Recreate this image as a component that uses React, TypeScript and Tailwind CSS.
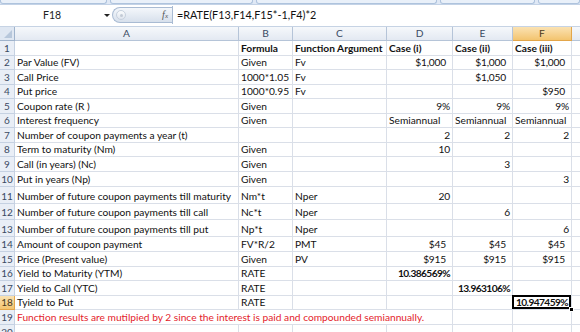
import React from "react";

type Row = [number, string, string, string, string, string, string];

const rows: Row[] = [
  [15, "", "Formula", "Function Argument", "Case (i)", "Case (ii)", "Case (iii)"],
  [14, "Par Value (FV)", "Given", "Fv", "$1,000", "$1,000", "$1,000"],
  [15, "Call Price", "1000*1.05", "Fv", "", "$1,050", ""],
  [14, "Put price", "1000*0.95", "Fv", "", "", "$950"],
  [15, "Coupon rate (R )", "Given", "", "9%", "9%", "9%"],
  [14, "Interest frequency", "Given", "", "Semiannual", "Semiannual", "Semiannual"],
  [15, "Number of coupon payments a year (t)", "", "", "2", "2", "2"],
  [14, "Term to maturity (Nm)", "Given", "", "10", "", ""],
  [15, "Call (in years) (Nc)", "Given", "", "", "3", ""],
  [15, "Put in years (Np)", "Given", "", "", "", "3"],
  [17, "Number of future coupon payments till maturity", "Nm*t", "Nper", "20", "", ""],
  [16, "Number of future coupon payments till  call", "Nc*t", "Nper", "", "6", ""],
  [17, "Number of future coupon payments till  put", "Np*t", "Nper", "", "", "6"],
  [15, "Amount of coupon payment", "FV*R/2", "PMT", "$45", "$45", "$45"],
  [15, "Price (Present value)", "Given", "PV", "$915", "$915", "$915"],
  [14, "Yield to Maturity (YTM)", "RATE", "", "10.386569%", "", ""],
  [15, "Yield to Call (YTC)", "RATE", "", "", "13.963106%", ""],
  [14, "Tyield to Put", "RATE", "", "", "", "10.947459%"],
  [15, "Function results are mutilpied by 2 since the interest is paid and compounded semiannually.", "", "", "", "", ""],
  [15, "", "", "", "", "", ""],
];

const heights: Record<number, string> = {
  14: "h-[14px]",
  15: "h-[15px]",
  16: "h-[16px]",
  17: "h-[17px]",
};

const grid = "border-r border-b border-[#dadfe8]";

function ValueCell({ v, w, bold }: { v: string; w: string; bold: boolean }) {
  const isNum = /^[\d$]/.test(v);
  const cur = v.startsWith("$");
  const pct = bold && v.endsWith("%");
  return (
    <div
      className={`${w} ${grid} flex items-end pb-[1px] whitespace-nowrap overflow-hidden ${
        isNum ? "justify-end" : "justify-start pl-[2px]"
      } ${cur ? "pr-[6px]" : isNum ? "pr-[2px]" : ""} ${bold ? "font-bold" : ""} ${
        pct ? "tracking-[-0.6px]" : isNum ? "tracking-[-0.2px]" : ""
      }`}
    >
      {v}
    </div>
  );
}

export default function App() {
  return (
    <div className="w-[580px] h-[332px] overflow-hidden bg-white font-['Lato',sans-serif] text-[10.2px] leading-[12px] text-[#111]">
      {/* ribbon edge */}
      <div className="h-[5px] flex gap-[3px] bg-[#dfe8f5] border-b border-[#c3d2e6]">
        <div className="w-[107px] rounded-b-[3px] border border-t-0 border-[#aec3dd] bg-[#e9f0f9]" />
        <div className="w-[143px] rounded-b-[3px] border border-t-0 border-[#aec3dd] bg-[#e9f0f9]" />
        <div className="w-[181px] rounded-b-[3px] border border-t-0 border-[#aec3dd] bg-[#e9f0f9]" />
        <div className="w-[95px] rounded-b-[3px] border border-t-0 border-[#aec3dd] bg-[#e9f0f9]" />
        <div className="flex-1 rounded-b-[3px] border border-t-0 border-[#aec3dd] bg-[#e9f0f9]" />
      </div>

      {/* formula bar */}
      <div className="h-[20px] flex items-center bg-white">
        <div className="w-[104px] text-center text-[10.5px] text-[#222]">F18</div>
        <div className="w-[5px] flex justify-center">
          <div className="w-0 h-0 border-l-[3px] border-r-[3px] border-t-[3px] border-l-transparent border-r-transparent border-t-[#222]" />
        </div>
        <div className="ml-[3px] w-[60px] h-[16px] rounded-l-full border border-r-0 border-[#a9bbd3] bg-gradient-to-b from-[#f4f7fb] to-[#d7e0ec] flex items-center justify-between pl-[3px] pr-[4px]">
          <div className="w-[10px] h-[10px] rounded-full border border-[#c7d1de] bg-gradient-to-b from-[#fbfcfd] to-[#dfe5ee] flex items-center justify-center">
            <div className="w-[3px] h-[3px] rounded-full bg-[#c3cbd6]" />
          </div>
          <span className="font-['Liberation_Serif',serif] italic text-[10px] text-[#555]">
            f<span className="text-[7px]">x</span>
          </span>
        </div>
        <div className="flex-1 h-[18px] border-l border-[#a9bbd3] flex items-center pl-[4px] text-[10.8px] text-[#111]">
          =RATE(F13,F14,F15*-1,F4)*2
        </div>
      </div>
      <div className="h-[1px] bg-white" />

      {/* column headers */}
      <div className="flex h-[15px] text-[#3a4a63] border-t border-[#c6d3e4] leading-none">
        <div className="w-[15px] border-r border-b border-[#9fb3cc] bg-[#dfe7f2] relative">
          <div className="absolute right-[2px] bottom-[2px] w-0 h-0 border-l-[8px] border-l-transparent border-b-[8px] border-b-[#b7c7db]" />
        </div>
        {[
          ["A", "w-[224px]"],
          ["B", "w-[54px]"],
          ["C", "w-[94px]"],
          ["D", "w-[66px]"],
          ["E", "w-[60px]"],
        ].map(([l, w]) => (
          <div
            key={l}
            className={`${w} border-r border-b border-[#b5c4d8] bg-gradient-to-b from-[#f6f8fb] to-[#e3e9f2] flex items-center justify-center`}
          >
            {l}
          </div>
        ))}
        <div className="w-[59px] border-r border-b border-[#e3a64a] bg-gradient-to-b from-[#fae2b2] to-[#f3c46e] flex items-center justify-center text-[#4a3a20]">
          F
        </div>
        <div className="flex-1 border-b border-[#b5c4d8] bg-gradient-to-b from-[#f6f8fb] to-[#e3e9f2]" />
      </div>

      {/* rows */}
      {rows.map((r, i) => {
        const n = i + 1;
        const [h, a, b, c, d, e, f] = r;
        const hc = heights[h];
        const sel = n === 18;
        const bold = n === 1 || n >= 16;
        return (
          <div key={n} className={`flex ${hc}`}>
            <div
              className={`w-[15px] flex items-end justify-center pb-[1px] text-[10px] border-r border-b ${
                sel
                  ? "bg-gradient-to-b from-[#fae2b2] to-[#f3c46e] border-[#e3a64a] text-[#4a3a20]"
                  : "bg-[#e9eef6] border-[#c5d1e2] text-[#3a4a63]"
              }`}
            >
              {n}
            </div>
            {n === 19 ? (
              <div className={`w-[438px] ${grid} flex items-end pb-[1px] pl-[2px] whitespace-nowrap text-[#e3232b]`}>
                {a}
              </div>
            ) : (
              <>
                <div className={`w-[224px] ${grid} flex items-end pb-[1px] pl-[2px] whitespace-nowrap`}>{a}</div>
                <div className={`w-[54px] ${grid} flex items-end pb-[1px] pl-[2px] whitespace-nowrap ${n === 1 ? "font-bold" : ""}`}>
                  {b}
                </div>
                <div className={`w-[94px] ${grid} flex items-end pb-[1px] pl-[2px] whitespace-nowrap ${n === 1 ? "font-bold" : ""}`}>
                  {c}
                </div>
                <ValueCell v={d} w="w-[66px]" bold={bold} />
              </>
            )}
            <ValueCell v={e} w="w-[60px]" bold={bold} />
            {sel ? (
              <div className={`w-[59px] ${grid} relative flex items-end justify-end pb-[1px] pr-[3px] font-bold tracking-[-0.6px]`}>
                {f}
                <div className="absolute -left-[1px] -top-[1px] right-0 bottom-0 border-2 border-black" />
                <div className="absolute -right-[3px] -bottom-[3px] w-[5px] h-[5px] bg-black border border-white" />
              </div>
            ) : (
              <ValueCell v={f} w="w-[59px]" bold={bold} />
            )}
            <div className="flex-1 border-b border-[#dadfe8]" />
          </div>
        );
      })}
    </div>
  );
}
